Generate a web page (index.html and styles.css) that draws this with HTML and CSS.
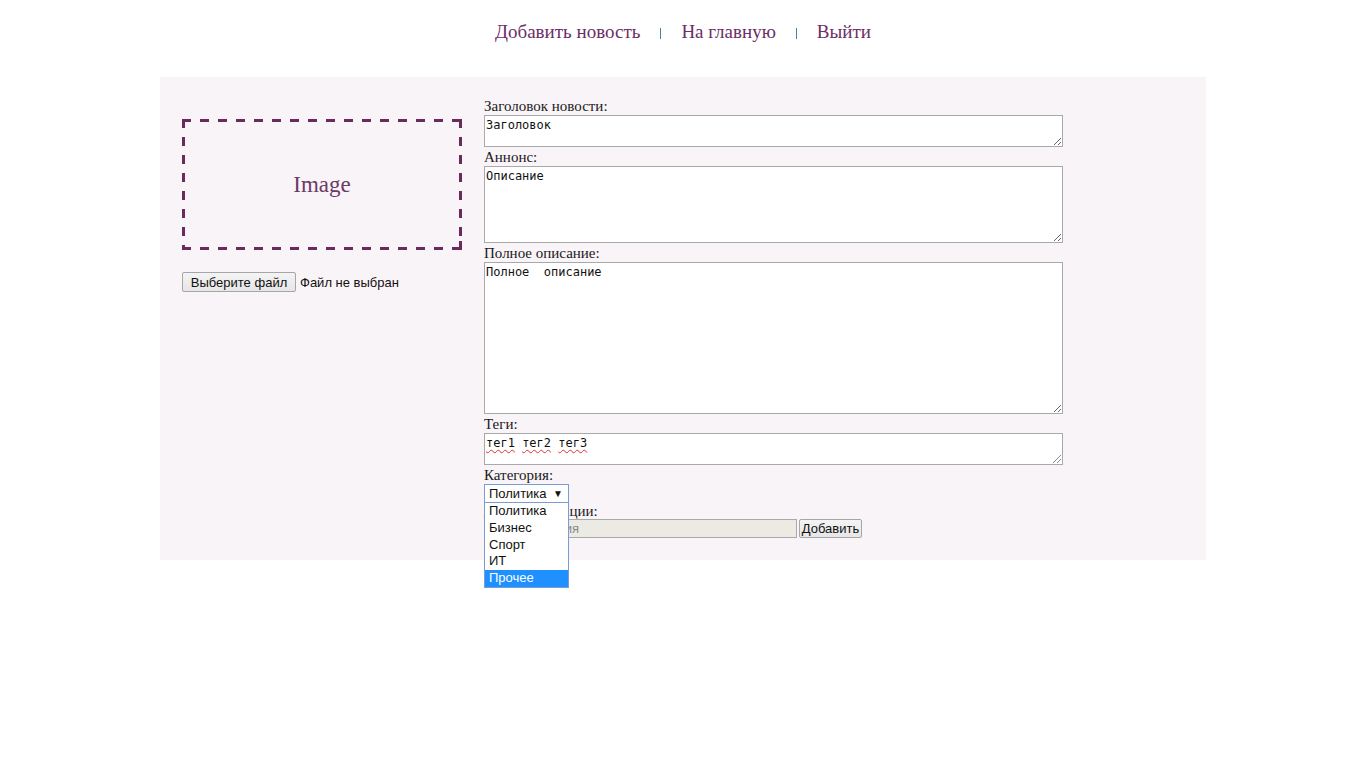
FILE: index.html
```html
<!DOCTYPE html>
<html lang="ru">
<head>
<meta charset="utf-8">
<title>Добавить новость</title>
<link rel="stylesheet" href="styles.css">
</head>
<body>
<nav class="nav">
  <a class="nav-link" href="#">Добавить новость</a>
  <span class="sep"></span>
  <a class="nav-link" href="#">На главную</a>
  <span class="sep"></span>
  <a class="nav-link" href="#">Выйти</a>
</nav>
<main class="panel">
  <div class="left">
    <div class="image-box">Image</div>
    <div class="file-row">
      <button class="btn file-btn" type="button">Выберите файл</button>
      <span class="file-text">Файл не выбран</span>
    </div>
  </div>
  <form class="right">
    <label class="lbl">Заголовок новости:</label>
    <textarea class="ta ta-title">Заголовок</textarea>
    <label class="lbl">Аннонс:</label>
    <textarea class="ta ta-short">Описание</textarea>
    <label class="lbl">Полное описание:</label>
    <textarea class="ta ta-full">Полное  описание</textarea>
    <label class="lbl">Теги:</label>
    <div class="ta ta-tags"><span class="typo">тег1</span> <span class="typo">тег2</span> <span class="typo">тег3</span><span class="grip"></span></div>
    <label class="lbl">Категория:</label>
    <div class="select-wrap">
      <div class="select">Политика<span class="arrow">▼</span></div>
      <ul class="options">
        <li class="opt">Политика</li>
        <li class="opt">Бизнес</li>
        <li class="opt">Спорт</li>
        <li class="opt">ИТ</li>
        <li class="opt opt-active">Прочее</li>
      </ul>
    </div>
    <label class="lbl lbl-date">Дата публикации:</label>
    <div class="date-row">
      <input class="date-input" type="text" placeholder="Дата создания" disabled>
      <button class="btn add-btn" type="button">Добавить</button>
    </div>
  </form>
</main>
</body>
</html>
```
FILE: styles.css
```css
html, body {
  margin: 0;
  padding: 0;
  background: #ffffff;
}
body {
  min-height: 768px;
  font-family: "Liberation Serif", "DejaVu Serif", serif;
  color: #222;
}
.nav {
  height: 77px;
  display: flex;
  justify-content: center;
  align-items: flex-start;
  box-sizing: border-box;
}
.nav-link {
  font-size: 19px;
  line-height: 22px;
  margin-top: 21px;
  color: #6b2f66;
  text-decoration: none;
}
.sep {
  width: 1px;
  height: 11px;
  margin: 28px 20px 0;
  background: #4f7fa0;
}
.panel {
  width: 1046px;
  height: 483px;
  margin: 0 auto;
  background: #f9f4f8;
  box-sizing: border-box;
  padding: 19px 22px 0 22px;
  display: flex;
  gap: 22px;
}
.left {
  width: 280px;
  padding-top: 23px;
}
.image-box {
  box-sizing: border-box;
  width: 280px;
  height: 131px;
  background:
    repeating-linear-gradient(90deg, #6b2a5e 0 9px, transparent 9px 18px) top left / 100% 3px no-repeat,
    repeating-linear-gradient(90deg, #6b2a5e 0 9px, transparent 9px 18px) bottom left / 100% 3px no-repeat,
    repeating-linear-gradient(180deg, #6b2a5e 0 9px, transparent 9px 18px) top left / 3px 100% no-repeat,
    repeating-linear-gradient(180deg, #6b2a5e 0 9px, transparent 9px 18px) top right / 3px 100% no-repeat;
  display: flex;
  align-items: center;
  justify-content: center;
  font-size: 23px;
  color: #6b3a66;
  position: relative;
}
.image-box::after {
  content: "";
  position: absolute;
  right: 0;
  bottom: 0;
  width: 9px;
  height: 9px;
  border-right: 3px solid #6b2a5e;
  border-bottom: 3px solid #6b2a5e;
  box-sizing: border-box;
}
.file-row {
  margin-top: 22px;
  display: flex;
  align-items: center;
  font-family: "Liberation Sans", Arial, sans-serif;
  font-size: 13px;
  color: #111;
}
.btn {
  font-family: "Liberation Sans", Arial, sans-serif;
  font-size: 13px;
  color: #111;
  background: linear-gradient(#f4f4f4, #e6e6e6);
  border: 1px solid #a6a6a6;
  border-radius: 2px;
  padding: 0;
  height: 20px;
  box-sizing: border-box;
}
.file-btn {
  width: 114px;
}
.file-text {
  margin-left: 4px;
}
.right {
  width: 579px;
  display: flex;
  flex-direction: column;
  margin: 0;
}
.lbl {
  display: block;
  font-size: 15px;
  line-height: 17px;
  padding-top: 2px;
  color: #1a1a1a;
}
.ta {
  display: block;
  box-sizing: border-box;
  width: 579px;
  margin: 0;
  padding: 2px 1px;
  border: 1px solid #a9a9a9;
  background: #fff;
  font-family: "DejaVu Sans Mono", "Liberation Mono", monospace;
  font-size: 12px;
  line-height: 14px;
  color: #111;
  resize: vertical;
}
.ta-title { height: 32px; }
.ta-short { height: 77px; }
.ta-full  { height: 152px; }
.ta-tags  {
  height: 32px;
  position: relative;
  white-space: pre;
}
.typo {
  text-decoration: underline wavy #e03030;
  text-decoration-thickness: 1px;
  text-underline-offset: 2px;
}
.grip {
  position: absolute;
  right: 1px;
  bottom: 1px;
  width: 8px;
  height: 8px;
  background:
    linear-gradient(135deg, transparent 45%, #888 45%, #888 52%, transparent 52%, transparent 70%, #888 70%, #888 77%, transparent 77%);
}
.select-wrap {
  position: relative;
  width: 85px;
}
.select {
  box-sizing: border-box;
  width: 85px;
  height: 19px;
  border: 1px solid #7a9cd3;
  background: #fff;
  font-family: "Liberation Sans", Arial, sans-serif;
  font-size: 13px;
  line-height: 17px;
  padding-left: 4px;
  color: #111;
  display: flex;
  justify-content: space-between;
}
.arrow {
  font-size: 10px;
  padding-right: 5px;
}
.options {
  position: absolute;
  top: 18px;
  left: 0;
  width: 85px;
  box-sizing: border-box;
  margin: 0;
  padding: 0;
  list-style: none;
  background: #fff;
  border: 1px solid #7a9cd3;
  z-index: 10;
  font-family: "Liberation Sans", Arial, sans-serif;
  font-size: 13px;
  color: #111;
}
.opt {
  height: 16.8px;
  line-height: 16.8px;
  padding-left: 4px;
}
.opt-active {
  background: #1e90ff;
  color: #fff;
}
.lbl-date {
  line-height: 16px;
  padding-top: 0;
}
.date-row {
  display: flex;
  align-items: center;
  gap: 2px;
}
.date-input {
  box-sizing: border-box;
  width: 313px;
  height: 19px;
  margin: 0;
  border: 1px solid #a9a9a9;
  background: #ebebe4;
  font-family: "Liberation Sans", Arial, sans-serif;
  font-size: 13px;
  padding: 0 3px 0 6px;
}
.date-input::placeholder {
  color: #8a8a8a;
}
.add-btn {
  width: 63px;
  height: 19px;
}
```
